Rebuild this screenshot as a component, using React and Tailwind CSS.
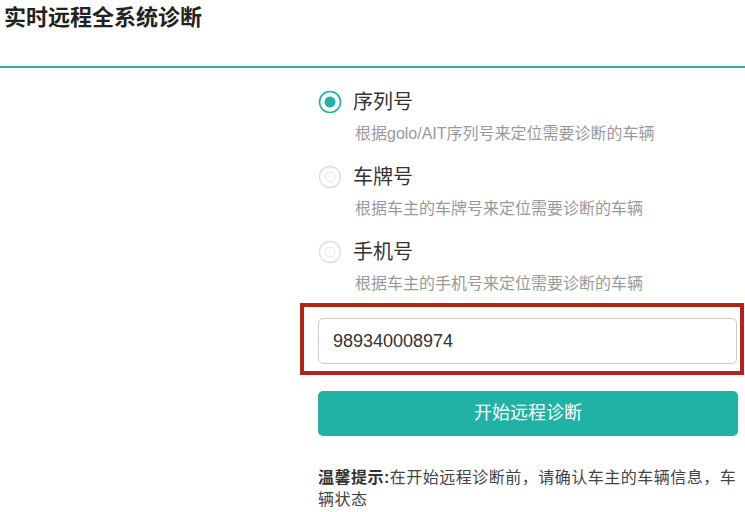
import React from 'react';

const options = [
  { label: '序列号', desc: '根据golo/AIT序列号来定位需要诊断的车辆', checked: true },
  { label: '车牌号', desc: '根据车主的车牌号来定位需要诊断的车辆', checked: false },
  { label: '手机号', desc: '根据车主的手机号来定位需要诊断的车辆', checked: false },
];

// Radio dot drawn as svg
const Radio = ({ checked }) => (
  <svg width="24" height="24" viewBox="0 0 24 24" className="shrink-0">
    {checked ? (
      <>
        <circle cx="12" cy="12" r="10.5" fill="#fff" stroke="#20b2a5" strokeWidth="1.6" />
        <circle cx="12" cy="12" r="5.5" fill="#20b2a5" />
      </>
    ) : (
      <>
        <circle cx="12" cy="12" r="10.5" fill="#fff" stroke="#dedede" strokeWidth="1.3" />
        <circle cx="12" cy="12" r="5" fill="#fff" stroke="#e8e8e8" strokeWidth="1" />
      </>
    )}
  </svg>
);

const App = () => {
  return (
    <div
      className="w-[745px] h-[512px] bg-white overflow-hidden text-[#333]"
      style={{ fontFamily: '"Liberation Sans", "Noto Sans CJK SC", sans-serif' }}
    >
      {/* header */}
      <div className="h-[68px] border-b-2 border-[#3ea99f] pl-[4px] pt-[3px]">
        <h1 className="text-[22px] leading-[30px] font-bold text-[#222]">实时远程全系统诊断</h1>
      </div>

      <div className="ml-[318px] w-[420px] pt-[19px]">
        {options.map((o, i) => (
          <div key={i} className="mb-[16px]">
            <div className="flex items-center h-[30px]">
              <Radio checked={o.checked} />
              <span className="ml-[11px] text-[20px] text-[#333]">{o.label}</span>
            </div>
            <div className="mt-[5px] ml-[37px] text-[16px] leading-[24px] text-[#999]">{o.desc}</div>
          </div>
        ))}

        <div className="relative mt-[22px] w-[419px]">
          <div className="absolute -left-[18px] -top-[15px] w-[444px] h-[72px] border-4 border-[#b3221b] pointer-events-none" />
          <div className="h-[46px] border border-[#cccccc] rounded-[5px] flex items-center pl-[14px] text-[18px] text-[#333]">
            989340008974
          </div>
        </div>

        <button className="mt-[27px] w-[420px] h-[45px] rounded-[5px] bg-[#20b2a5] text-white text-[18px] flex items-center justify-center">
          开始远程诊断
        </button>

        <p className="mt-[31px] text-[16px] leading-[22px] tracking-[0.5px] text-[#444]">
          <span className="font-bold text-[#333]">温馨提示:</span>在开始远程诊断前，请确认车主的车辆信息，车辆状态
        </p>
      </div>
    </div>
  );
};

export default App;
